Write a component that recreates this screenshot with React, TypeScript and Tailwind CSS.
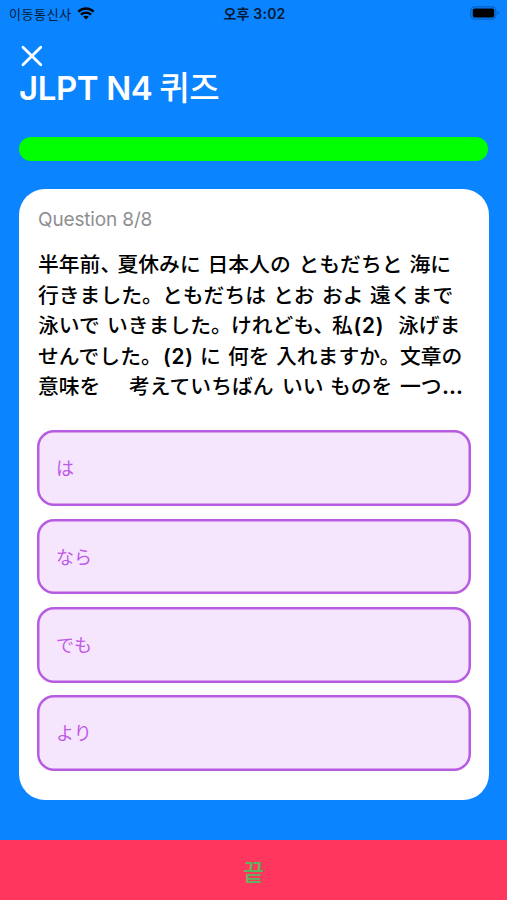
import clsx from "clsx";

interface Segment {
    text: string;
    width: string;
}

const questionLines: Segment[][] = [
    [
        { text: "半年前、", width: "w-[79.5px]" },
        { text: "夏休みに", width: "w-[90px]" },
        { text: "日本人の", width: "w-[91px]" },
        { text: "ともだちと", width: "w-[111px]" },
        { text: "海に", width: "w-[44px]" },
    ],
    [
        { text: "行きました。", width: "w-[124px]" },
        { text: "ともだちは", width: "w-[111px]" },
        { text: "とお", width: "w-[49px]" },
        { text: "およ", width: "w-[48px]" },
        { text: "遠くまで", width: "w-[86px]" },
    ],
    [
        { text: "泳いで", width: "w-[69px]" },
        { text: "いきました。", width: "w-[124px]" },
        { text: "けれども、", width: "w-[101px]" },
        { text: "私", width: "w-[21.5px]" },
        { text: "(2)", width: "w-[44.5px] font-semibold tracking-[0.8px]" },
        { text: "泳げま", width: "w-[64px]" },
    ],
    [
        { text: "せんでした。", width: "w-[125px]" },
        { text: "(2)", width: "w-[37px] font-semibold tracking-[0.8px]" },
        { text: "に", width: "w-[28px]" },
        { text: "何を", width: "w-[48px]" },
        { text: "入れますか。", width: "w-[124px]" },
        { text: "文章の", width: "w-[64px]" },
    ],
    [
        { text: "意味を", width: "w-[91px]" },
        { text: "考えていちばん", width: "w-[153px]" },
        { text: "いい", width: "w-[48px]" },
        { text: "ものを", width: "w-[70px]" },
        { text: "一つ", width: "w-[42px]" },
        { text: "...", width: "w-[22px] font-bold" },
    ],
];

const answers = ["は", "なら", "でも", "より"];

function StatusBar() {
    return (
        <div className="grid h-7 grid-cols-3 items-center pl-[9px] pr-[7px] text-[13px] leading-none text-[#061a35]">
            <div className="flex items-center gap-[6px]">
                <span className="tracking-[0.6px]">이동통신사</span>
                <svg className="-ml-px -mt-px h-[13px] w-[18px] shrink-0" viewBox="0 0 19 14" fill="none" stroke="#000" strokeWidth="2.5">
                    <path d="M1.2 5.1C6 .5 13 .5 17.8 5.1" />
                    <path d="M4.1 8.2C7.2 5.3 11.8 5.3 14.9 8.2" />
                    <path d="M6.5 10.5C8.2 9 10.8 9 12.5 10.5L9.5 13.5Z" fill="#000" stroke="none" />
                </svg>
            </div>
            <span className="text-center text-[14px] font-semibold tracking-[0.2px]">오후 3:02</span>
            <svg className="-mt-[2px] justify-self-end" width="30" height="14" viewBox="0 0 30 14">
                <rect x=".8" y=".8" width="25" height="12.4" rx="4" fill="none" stroke="#0661c2" strokeWidth="1.2" />
                <rect x="2.7" y="2.6" width="21.5" height="8.8" rx="2" fill="#000" />
                <path d="M27.6 4.8C29.4 5.6 29.4 8.4 27.6 9.2Z" fill="#0661c2" />
            </svg>
        </div>
    );
}

export default function App() {
    return (
        <div className="flex h-[900px] w-full flex-col overflow-hidden bg-[#0a84ff] font-['Inter','Noto_Sans_CJK_JP',sans-serif]">
            <div className="font-['Inter','Noto_Sans_CJK_KR',sans-serif]">
                <StatusBar />
            </div>

            <header className="px-[19px] pt-[17px] font-['Inter','Noto_Sans_CJK_KR',sans-serif] text-white">
                <button type="button" aria-label="Close" className="block h-[22px] pl-[2px]">
                    <svg width="22" height="22" viewBox="0 0 22 22" fill="none" stroke="white" strokeWidth="2.8" strokeLinecap="round">
                        <path d="M2 2.2 19.8 19.8M19.8 2.2 2 19.8" />
                    </svg>
                </button>
                <h1 className="h-[42px] whitespace-nowrap text-[33px] font-semibold leading-[42px] tracking-[-0.4px]">
                    JLPT N4 <span className="-ml-px font-medium">퀴즈</span>
                </h1>
            </header>

            {/* Progress */}
            <div className="mx-[19px] mt-[27.5px] h-[24.5px] shrink-0 rounded-full bg-[#00ff00]" />

            {/* Question card */}
            <main className="ml-[19px] mr-[18.5px] mt-[28.3px] h-[611.2px] shrink-0 rounded-[26px] bg-white px-[18px] pt-[18.7px]">
                <p className="h-6 pl-px text-[19px] leading-6 tracking-[-0.15px] text-[#8e8e93]">Question 8/8</p>
                {/* halt keeps the punctuation at half width */}
                <div className="mt-[18px] pl-px text-[20.8px] font-medium leading-[30.6px] text-black [font-feature-settings:'halt']">
                    {questionLines.map((line, i) => (
                        <p key={i} className="flex whitespace-nowrap">
                            {line.map((segment) => (
                                <span key={segment.text} className={clsx("shrink-0", segment.width)}>
                                    {segment.text}
                                </span>
                            ))}
                        </p>
                    ))}
                </div>

                <div className="mt-[27.3px] flex flex-col gap-[12.6px]">
                    {answers.map((answer) => (
                        <button
                            key={answer}
                            type="button"
                            className="h-[75.8px] w-[434px] rounded-[17px] bg-[#f5e6fd] pl-[19px] pt-px text-left text-[18px] text-[#bf5ae6] shadow-[inset_0_0_0_2.5px_#b75be0]"
                        >
                            {answer}
                        </button>
                    ))}
                </div>
            </main>

            <footer className="mt-auto flex h-[60px] shrink-0 items-center justify-center bg-[#ff375f] pt-[6px] font-['Inter','Noto_Sans_CJK_KR',sans-serif] text-[23px] font-medium text-[#58b861]">
                끝
            </footer>
        </div>
    );
}
